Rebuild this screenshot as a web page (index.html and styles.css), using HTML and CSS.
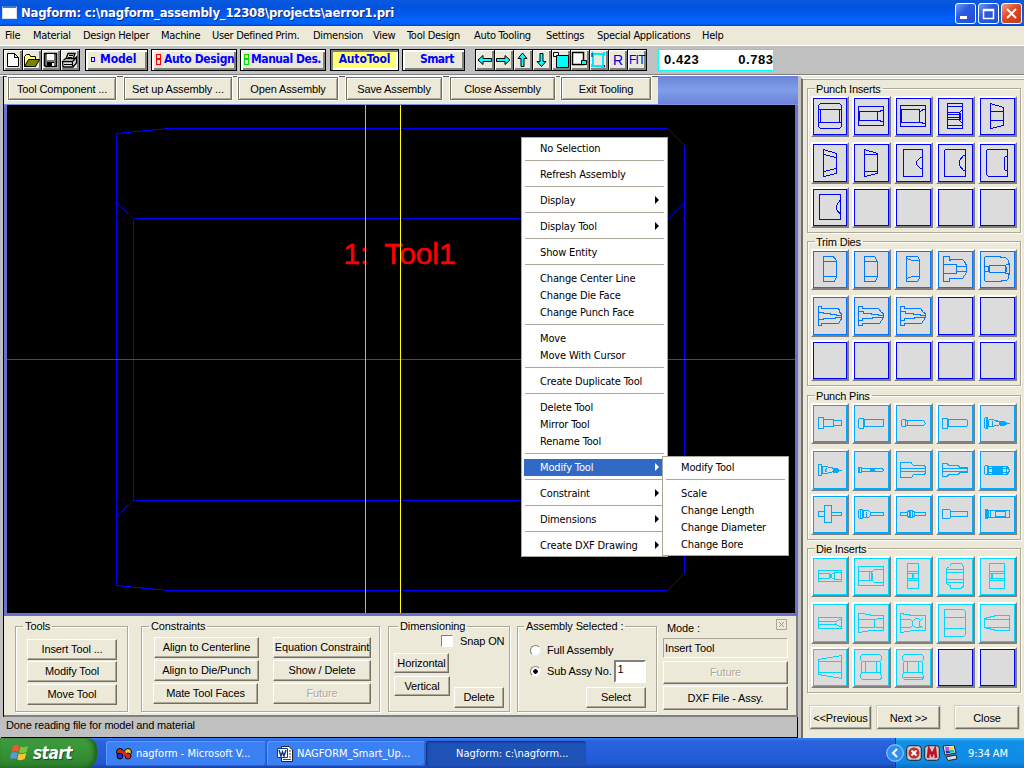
FILE: index.html
```html
<!DOCTYPE html>
<html lang="en">
<head>
<meta charset="utf-8">
<title>Nagform</title>
<link rel="stylesheet" href="styles.css">
</head>
<body>
<header class="titlebar">
  <span class="app-icon"></span>
  <h1 class="title">Nagform: c:\nagform_assembly_12308\projects\aerror1.pri</h1>
  <span class="win-btn"><svg width="17" height="17"><path d="M3 12.5H10" stroke="#fff" stroke-width="3"/></svg></span>
  <span class="win-btn"><svg width="17" height="17"><path d="M3.500 4.500H13.500V13.500H3.500ZM3.500 5.500H13.500" stroke="#fff" fill="none" stroke-width="1.500"/></svg></span>
  <span class="win-btn win-close"><svg width="17" height="17"><path d="M4 4L13 13M13 4L4 13" stroke="#fff" stroke-width="2"/></svg></span>
</header>
<nav class="menubar">
  <span style="width:28px">File</span><span style="width:50px">Material</span><span style="width:78px">Design Helper</span><span style="width:51px">Machine</span><span style="width:101px">User Defined Prim.</span><span style="width:60px">Dimension</span><span style="width:34px">View</span><span style="width:67px">Tool Design</span><span style="width:72px">Auto Tooling</span><span style="width:51px">Settings</span><span style="width:105px">Special Applications</span><span>Help</span>
</nav>
<div class="toolbar">
  <div class="icon-strip">
    <span class="tb"><svg viewBox="0 0 19 22"><path d="M4.500 4.500H11.500L15.500 8.500V17.500H4.500ZM11.500 4.500V8.500H15.500" fill="#fff" stroke="#000"/></svg></span>
    <span class="tb"><svg viewBox="0 0 19 22"><path d="M2.500 17.500V7.500L4.500 5.500H7.500L8.500 7.500H13.500V10.500" fill="#ff6" stroke="#000"/><path d="M2.500 17.500L6.500 10.500H17.500L13.500 17.500Z" fill="#808000" stroke="#000"/></svg></span>
    <span class="tb"><svg viewBox="0 0 19 22"><path d="M3.500 4.500H15.500V17.500H4.500L3.500 16.500Z" fill="#777" stroke="#000" stroke-width="1.500"/><path d="M6 5H13V11H6Z" fill="#fff"/><path d="M6 13H13V17H6Z"/><path d="M11 14H13V17H11Z" fill="#fff"/></svg></span>
    <span class="tb"><svg viewBox="0 0 19 22"><path d="M6 10L8 4.500H15L13 10M3.500 11L6 9.500H15L16.500 8V14L13 18H3L2.500 12.500H12.500L15 10M12.500 12.500V17" fill="#ddd" stroke="#000" stroke-width="1.300"/><path d="M9 6.500H13M8 8.500H12M4 15.500H12" stroke="#000"/></svg></span>
  </div>
  <div class="mode-btn model"><i class="sq blue"></i><span>Model</span></div>
  <div class="mode-btn auto"><i class="pair red"></i><span>Auto Design</span></div>
  <div class="mode-btn manual"><i class="pair green"></i><span>Manual Des.</span></div>
  <div class="mode-btn autotool"><span>AutoTool</span></div>
  <div class="mode-btn smart"><span>Smart</span></div>
  <div class="icon-strip arrows">
    <span class="tb"><svg viewBox="0 0 19 22"><path d="M3 11L8 6.500V9.500H16.500V12.500H8V15.500Z" fill="#0ff" stroke="#000"/></svg></span>
    <span class="tb"><svg viewBox="0 0 19 22"><path d="M16 11L11 6.500V9.500H2.500V12.500H11V15.500Z" fill="#0ff" stroke="#000"/></svg></span>
    <span class="tb"><svg viewBox="0 0 19 22"><path d="M9.500 4L14 9.500H11V17.500H8V9.500H5Z" fill="#0ff" stroke="#000"/></svg></span>
    <span class="tb"><svg viewBox="0 0 19 22"><path d="M9.500 17.500L5 12.500H8V4.500H11V12.500H14Z" fill="#0ff" stroke="#000"/></svg></span>
    <span class="tb"><svg viewBox="0 0 19 22"><path d="M2.500 3.500H7.500V7.500H2.500Z" fill="#fff" stroke="#000"/><path d="M5.500 6.500H17.500V18.500H5.500Z" fill="#0ff" stroke="#000"/></svg></span>
    <span class="tb"><svg viewBox="0 0 19 22"><path d="M2.500 3.500H13.500V15.500H2.500Z" fill="#fff" stroke="#000" stroke-width="1.500"/><path d="M11.500 11.500H16.500V15.500H11.500Z" fill="#0ff" stroke="#000"/></svg></span>
    <span class="tb"><svg viewBox="0 0 19 22"><path d="M4 5H14V17H4ZM3 3L6 6M15 3V7M3 15V18M12 18H16" fill="none" stroke="#00e8ff" stroke-width="2"/><path d="M3 4V8M15 16L16 18" stroke="#000"/></svg></span>
    <span class="tb letter">R</span>
    <span class="tb letter fit">FIT</span>
  </div>
  <div class="coords"><span>0.423</span><span>0.783</span></div>
</div>
<main class="workspace">
  <section class="mdi">
    <div class="strip">
      <div class="cmd" style="width:108px">Tool Component ...</div>
      <div class="cmd" style="width:108px">Set up Assembly ...</div>
      <div class="cmd" style="width:100px">Open Assembly</div>
      <div class="cmd" style="width:96px">Save Assembly</div>
      <div class="cmd" style="width:105px">Close Assembly</div>
      <div class="cmd" style="width:90px">Exit Tooling</div>
      <div class="strip-rest"></div>
    </div>
    <div class="canvas">
      <svg class="drawing" width="788" height="508" viewBox="6.500 104.500 788 508">
        <text x="343" y="263.500" textLength="112" xml:space="preserve">1:  Tool1</text>
        <g class="blue-lines">
          <path d="M116 133L168 128H667L684 145V573L667 590H168L116 585Z"/>
          <path d="M133 218H668M133 218V500M133 500H667"/>
          <path class="thin" d="M116 202L133 218M668 218L684 202M667 500L684 516M133 500L116 516"/>
        </g>
        <path stroke="#ff0000" d="M6 359H795"/>
        <path stroke="#00ffff" d="M365 104V613"/>
        <path stroke="#ffff00" d="M400 104V613"/>
      </svg>
    </div>
    <div class="panel">
      <fieldset class="grp tools"><legend>Tools</legend>
        <div class="btn">Insert Tool ...</div><div class="btn">Modify Tool</div><div class="btn">Move Tool</div>
      </fieldset>
      <fieldset class="grp constraints"><legend>Constraints</legend>
        <div class="btn">Align to Centerline</div><div class="btn">Equation Constraint</div>
        <div class="btn">Align to Die/Punch</div><div class="btn">Show / Delete</div>
        <div class="btn mate">Mate Tool Faces</div><div class="btn off">Future</div>
      </fieldset>
      <fieldset class="grp dims"><legend>Dimensioning</legend>
        <div class="snap"><i class="check"></i>Snap ON</div>
        <div class="btn horiz">Horizontal</div>
        <div class="dim-row"><div class="btn vert">Vertical</div><div class="btn del">Delete</div></div>
      </fieldset>
      <fieldset class="grp assy"><legend>Assembly Selected :</legend>
        <div class="radio-row"><i class="radio"></i>Full Assembly</div>
        <div class="radio-row sub"><i class="radio on"></i>Sub Assy No.<span class="num">1</span></div>
        <div class="btn select">Select</div>
      </fieldset>
      <div class="mode">
        <div class="mode-head"><span>Mode :</span><i class="tiny-x"><svg width="9" height="9"><path d="M2 2L7 7M7 2L2 7" stroke="#999"/></svg></i></div>
        <div class="field">Insert Tool</div>
        <div class="btn off">Future</div>
        <div class="btn">DXF File - Assy.</div>
      </div>
    </div>
    <div class="status">Done reading file for model and material</div>
  </section>
  <aside class="side">
    <fieldset class="palette c-blue"><legend>Punch Inserts</legend>
      <span class="tile"><svg viewBox="-.5 -.5 39 42"><path d="M9 7H28L30 9V30L28 32H9L7 30V9ZM7 13H30M7 26H30M9 13V26M28 13V26"/></svg></span>
      <span class="tile"><svg viewBox="-.5 -.5 39 42"><path d="M6 10H31V29H6ZM6 15H25V24H6M7 15V24M25 15H28V14H31M25 24H28V25H31"/></svg></span>
      <span class="tile"><svg viewBox="-.5 -.5 39 42"><path d="M6 9H31V30H6ZM6 13H25V26H6M7 13V26M25 15L28 14V13H31M25 26H28V27H31"/></svg></span>
      <span class="tile"><svg viewBox="-.5 -.5 39 42"><path d="M11 7H26V32H11ZM11 10H26M11 29H26M11 16H23M11 18H24M11 21H24M11 23H23M26 13L23 16V24L26 27M24 16V23"/></svg></span>
      <span class="tile"><svg viewBox="-.5 -.5 39 42"><path d="M12 7L25 11V29L12 32ZM12 15H25M12 24H25"/></svg></span>
      <span class="tile"><svg viewBox="-.5 -.5 39 42"><path d="M12 7L25 11V31L12 34ZM12 12L25 15M12 29L25 26"/></svg></span>
      <span class="tile"><svg viewBox="-.5 -.5 39 42"><path d="M12 7L25 11V31L12 34ZM12 12H25M12 29H25"/></svg></span>
      <span class="tile"><svg viewBox="-.5 -.5 39 42"><path d="M9 7H28V34H9ZM28 15H26L22 19V22L26 26H28"/></svg></span>
      <span class="tile"><svg viewBox="-.5 -.5 39 42"><path d="M9 7H29V34H8V8ZM29 13H27L23 18V23L27 28H29"/></svg></span>
      <span class="tile"><svg viewBox="-.5 -.5 39 42"><path d="M9 7H29V34H10L8 32V8ZM29 14H27L26 15V27L27 28H29"/></svg></span>
      <span class="tile"><svg viewBox="-.5 -.5 39 42"><path d="M8 7H29V32H8ZM29 12L25 18V22L29 27"/></svg></span>
      <span class="tile"></span><span class="tile"></span><span class="tile"></span><span class="tile"></span>
    </fieldset>
    <fieldset class="palette c-azure"><legend>Trim Dies</legend>
      <span class="tile"><svg viewBox="-.5 -.5 39 42"><path d="M12 7H22L23 9H24L25 12V27L23 32H12ZM12 12H25M12 27H25"/></svg></span>
      <span class="tile"><svg viewBox="-.5 -.5 39 42"><path d="M12 7H22L25 12V27L23 32H12ZM12 12H25M12 27H25"/></svg></span>
      <span class="tile"><svg viewBox="-.5 -.5 39 42"><path d="M12 7H23L25 10V29L23 32H12ZM12 9L18 11H24M12 29L18 27H25"/></svg></span>
      <span class="tile"><svg viewBox="-.5 -.5 39 42"><path d="M7 7H13V11H14V10H26L28 12L30 16V23L26 29H13V32H7ZM7 15H20V24H7M20 17H30M20 22H30"/></svg></span>
      <span class="tile"><svg viewBox="-.5 -.5 39 42"><path d="M7 7H22V8H27L30 11V14H31V25H30V29L28 31H23V32H7L6 31V8ZM6 17H10V22H6M11 16H27V23H11ZM27 15H31M27 24H31M27 15V24M28 17V22"/></svg></span>
      <span class="tile"><svg viewBox="-.5 -.5 39 42"><path d="M7 11H10V13H26L28 14V17L30 18V24H29L28 27L27 28H10V30H7ZM7 17H12V18H19V19H25V20H30M7 24H12V23H24V22H30"/></svg></span>
      <span class="tile"><svg viewBox="-.5 -.5 39 42"><path d="M6 11H10V13H26L29 17L31 18V22L29 25L27 28H10V30H6ZM6 16H11V18H19V19H26V20H31M6 25H10V23H20V22H31"/></svg></span>
      <span class="tile"><svg viewBox="-.5 -.5 39 42"><path d="M6 11H10V13H26L29 17L31 18V22L29 25L27 28H10V30H6ZM6 16H11V18H19V19H26V20H31M6 25H10V23H20V22H31"/></svg></span>
      <span class="tile none"></span><span class="tile none"></span><span class="tile none"></span><span class="tile none"></span><span class="tile none"></span><span class="tile none"></span><span class="tile none"></span>
    </fieldset>
    <fieldset class="palette c-sky"><legend>Punch Pins</legend>
      <span class="tile"><svg viewBox="-.5 -.5 39 42"><path d="M7 14H12V25H7ZM12 16H22V23H12M22 17H30V22H22"/></svg></span>
      <span class="tile"><svg viewBox="-.5 -.5 39 42"><path d="M7 15H11V25H7L6 24V16ZM12 16H31V23H12Z"/></svg></span>
      <span class="tile"><svg viewBox="-.5 -.5 39 42"><path d="M8 16H11V23H8L7 22V17ZM11 17H29L31 20L29 22H11M13 17V22"/></svg></span>
      <span class="tile"><svg viewBox="-.5 -.5 39 42"><path d="M6 15H11V25H6ZM12 16H30L31 17V22L30 23H12Z"/></svg></span>
      <span class="tile"><svg viewBox="-.5 -.5 39 42"><path d="M7 14H9V25H7L6 24V15ZM10 16H14L17 17H19M10 23H14L17 22H20M8 14V25M10 16V23M14 17V22M18 18L27 20L18 22M31 20H25"/><path class="fill" d="M21 18H26L29 20L26 22H22Z"/></svg></span>
      <span class="tile"><svg viewBox="-.5 -.5 39 42"><path d="M7 15H10V26H7ZM11 17H15L18 18H20L24 20L20 23H18L15 24H11ZM15 19L14 21L15 23M30 21H24"/><path class="fill" d="M22 19H26L28 21L26 23H22Z"/></svg></span>
      <span class="tile"><svg viewBox="-.5 -.5 39 42"><path d="M6 18H9V23H6ZM9 19H30L31 21L30 22H9M7 18V23"/><path class="fill" d="M18 20H22V22H18Z"/></svg></span>
      <span class="tile"><svg viewBox="-.5 -.5 39 42"><path d="M6 13H17V14L19 16H30L31 18V23L30 25H19L17 28H6ZM6 19H31M6 22H31"/></svg></span>
      <span class="tile"><svg viewBox="-.5 -.5 39 42"><path d="M6 14H11L12 16H22L23 18H31V23H23L22 25H12L11 27H6ZM6 19H31M6 22H31"/></svg></span>
      <span class="tile"><svg viewBox="-.5 -.5 39 42"><path d="M7 16H9V25H7L6 24V17ZM10 17H29L31 21L29 25H10ZM10 19H29M10 23H29M28 17V25"/><path class="fill" d="M14 18H24V24H14Z"/></svg></span>
      <span class="tile"><svg viewBox="-.5 -.5 39 42"><path d="M13 11H20V28H13ZM13 17H7V22H13M20 18H30V21H20"/></svg></span>
      <span class="tile"><svg viewBox="-.5 -.5 39 42"><path d="M7 15H10V24H7L6 23V16ZM11 16H16L18 18H31V21H18L16 23H11ZM8 15V24M14 17V22M18 18V21"/></svg></span>
      <span class="tile"><svg viewBox="-.5 -.5 39 42"><path d="M6 18H13V21H6ZM14 16H18V23H14L13 21V18ZM18 17L22 18H31V21H22L18 22M15 16V23M16 16V23M20 18V21"/></svg></span>
      <span class="tile"><svg viewBox="-.5 -.5 39 42"><path d="M6 15H13L14 16V23L13 24H6ZM14 17H31V22H14"/></svg></span>
      <span class="tile"><svg viewBox="-.5 -.5 39 42"><path d="M10 16H31V23H10ZM17 17H27V22H17ZM12 16V23"/><path class="fill" d="M7 15H9V24H7Z"/></svg></span>
    </fieldset>
    <fieldset class="palette c-cyan"><legend>Die Inserts</legend>
      <span class="tile"><svg viewBox="-.5 -.5 39 42"><path d="M7 14H30V25H7ZM7 17H17L19 18H20L23 16H30M7 22H17L20 21L23 23H30M23 16V23"/><path class="fill" d="M18 18H20V21H18Z"/></svg></span>
      <span class="tile"><svg viewBox="-.5 -.5 39 42"><path d="M6 10H31V29H6ZM6 15H20L22 13H31M6 24H20L22 26H31M17 15V24M19 15V24M20 16V23"/></svg></span>
      <span class="tile"><svg viewBox="-.5 -.5 39 42"><path d="M13 7H24V32H13ZM13 15H24M13 24H24M13 17H24M13 22H24M18 17V22M19 17V22"/></svg></span>
      <span class="tile"><svg viewBox="-.5 -.5 39 42"><path d="M14 8L15 7H25L27 10V29L26 31L24 32H14V29L11 28L10 27V12L13 10L14 9ZM10 13H27M10 16H27M10 23H27M10 26H27"/></svg></span>
      <span class="tile"><svg viewBox="-.5 -.5 39 42"><path d="M11 7H26V32H11ZM11 15H26M11 24H26M11 17H26M11 22H26M14 17V22M13 17V22"/></svg></span>
      <span class="tile"><svg viewBox="-.5 -.5 39 42"><path d="M7 15H30V26H7ZM7 19H25L28 17H30M7 22H25L28 24H30M24 20V22"/></svg></span>
      <span class="tile"><svg viewBox="-.5 -.5 39 42"><path d="M6 11L18 12V13H31V28H19L6 30ZM6 17H22V25H6M22 18L25 16H31M22 24L25 25H31"/></svg></span>
      <span class="tile"><svg viewBox="-.5 -.5 39 42"><path d="M6 11L18 13H31V28H19L6 30ZM6 17H16L18 19L21 16H24L26 18L28 16M6 25H16L18 23L21 25H25L27 24L29 26M18 19V23M25 18V24"/></svg></span>
      <span class="tile"><svg viewBox="-.5 -.5 39 42"><path d="M8 7H27L29 9V32L27 34H8ZM8 15H29M8 26H29"/></svg></span>
      <span class="tile"><svg viewBox="-.5 -.5 39 42"><path d="M6 16L18 13H31V28H18L6 25ZM6 17H31M6 25H31"/></svg></span>
      <span class="tile"><svg viewBox="-.5 -.5 39 42"><path d="M7 12L30 8V31L7 27ZM7 14H30M7 25H30"/></svg></span>
      <span class="tile"><svg viewBox="-.5 -.5 39 42"><path d="M10 7H27L29 9V12L27 14H10L8 12V9ZM10 25H27L29 28V31L27 32H10L8 30V27ZM9 14V25M28 14V25M13 14V25M24 14V25"/></svg></span>
      <span class="tile"><svg viewBox="-.5 -.5 39 42"><path d="M10 7H27L29 9V12L27 14H10L8 12V9ZM10 25H27L29 28V31L27 32H10L8 30V27ZM9 14V25M28 14V25M13 14V25M24 14V25M9 30H28"/></svg></span>
      <span class="tile none"></span><span class="tile none"></span>
    </fieldset>
    <div class="side-btns"><div class="btn prev">&lt;&lt;Previous</div><div class="btn next">Next &gt;&gt;</div><div class="btn close">Close</div></div>
  </aside>
</main>
<footer class="taskbar">
  <div class="start"><svg width="20" height="20" viewBox="0 0 20 20"><path d="M3 3Q6 1 9.500 3L8 9Q5 7 1.500 9Z" fill="#f05a28"/><path d="M10.500 3.500Q14 5 18 3L16.500 9Q13 11 9 9.500Z" fill="#7cc33f"/><path d="M1.300 10Q4 8.500 7.800 10L6.300 16Q3 14.500 0 16Z" fill="#5b93f0"/><path d="M8.800 10.500Q12 12 16.200 10L14.700 16Q11 18 7.300 16.500Z" fill="#fbc72e"/></svg><span>start</span></div>
  <div class="task t1"><svg width="16" height="12" viewBox="0 0 16 12"><circle cx="4" cy="4" r="3.500" fill="#0a9020" stroke="#000"/><circle cx="12" cy="4" r="3.500" fill="#e8d020" stroke="#000"/><circle cx="4" cy="8" r="3" fill="#2030d0" stroke="#000"/><circle cx="12" cy="8" r="3" fill="#e02020" stroke="#000"/><path d="M2 3Q8 3 13 10" stroke="#e02020" stroke-width="3" fill="none"/></svg><span>nagform - Microsoft V...</span></div>
  <div class="task t2"><svg width="16" height="16" viewBox="0 0 16 16"><path d="M4.500 .5H12L15.500 4V15.500H4.500Z" fill="#fff" stroke="#222"/><path d="M12 5H14M12 8H14M12 11H14M6 13.500H14" stroke="#444"/><path d="M.5 2.500H10.500V11.500H.5Z" fill="#fff" stroke="#123a8c"/><path d="M2 4L4 10L5.500 6L7 10L9 4" fill="none" stroke="#123a8c" stroke-width="1.500"/></svg><span>NAGFORM_Smart_Up...</span></div>
  <div class="task t3"><span>Nagform: c:\nagform...</span></div>
  <div class="tray">
    <svg class="chev" width="18" height="18"><circle cx="9" cy="9" r="8.300" fill="#2f8ff0" stroke="#a8d4ff"/><path d="M11 5L7 9L11 13" fill="none" stroke="#fff" stroke-width="2"/></svg>
    <svg width="16" height="16"><rect x=".7" y=".7" width="14.600" height="14.600" rx="3" fill="#c9c9c9" stroke="#222"/><circle cx="8" cy="8" r="5.500" fill="#c3272f"/><path d="M5.500 5.500L10.500 10.500M10.500 5.500L5.500 10.500" stroke="#fff" stroke-width="2"/></svg>
    <svg width="16" height="16"><rect x=".7" y=".7" width="14.600" height="14.600" rx="3" fill="#c9c9c9" stroke="#222"/><path d="M4 13L5 4L8 10L11 4L12 13" fill="none" stroke="#c0102a" stroke-width="2.600"/></svg>
    <svg width="16" height="16"><path d="M1 1L12 0L14 8L3 10Z" fill="#eee" stroke="#222"/><path d="M3 2L7 2L7.500 5L3.500 5.500Z" fill="#e838e8"/><path d="M7 2L11 1.500L12 5L7.500 5Z" fill="#f0e020"/><path d="M3.500 5.500H7.500L8 8L4 8.500Z" fill="#1030e0"/><path d="M7.500 5L12 5L12.500 7.500L8 8Z" fill="#20c0a0"/><path d="M4 12L14 10L15 14L6 15.500Z" fill="#ddd" stroke="#222"/></svg>
    <span class="clock">9:34 AM</span>
  </div>
</footer>
<div class="popup main-menu">
  <p>No Selection</p><hr><p>Refresh Assembly</p><hr><p class="more">Display</p><hr><p class="more">Display Tool</p><hr><p>Show Entity</p><hr>
  <p>Change Center Line</p><p>Change Die Face</p><p>Change Punch Face</p><hr><p>Move</p><p>Move With Cursor</p><hr><p>Create Duplicate Tool</p><hr>
  <p>Delete Tool</p><p>Mirror Tool</p><p>Rename Tool</p><hr><p class="more hot">Modify Tool</p><hr><p class="more">Constraint</p><hr><p class="more">Dimensions</p><hr><p class="more">Create DXF Drawing</p>
</div>
<div class="popup sub-menu">
  <p>Modify Tool</p><hr><p>Scale</p><p>Change Length</p><p>Change Diameter</p><p>Change Bore</p>
</div>
</body>
</html>
```
FILE: styles.css
```css
* { box-sizing: border-box; }
body {
  margin: 0; width: 1024px; height: 768px; overflow: hidden;
  display: flex; flex-direction: column; position: relative;
  background: #ece9d8; color: #000;
  font: 11px/13px "Liberation Sans", Arial, sans-serif; letter-spacing: -.12px;
  white-space: nowrap;
}
svg { display: block; flex: none; }

.titlebar {
  height: 26px; flex: none; display: flex; align-items: center; gap: 2px; padding: 0 0 0 2px;
  background: linear-gradient(#0a5ae0 0, #0453dd 25%, #0058ee 50%, #0066ff 80%, #0060f5 92%, #003fc0 100%);
}
.app-icon { width: 15px; height: 13px; margin: 0 2px 2px 0; background: #fff; border: 1px solid #dde; border-top: 2px solid #3b7bd8; }
.title {
  margin: 0; flex: 1; color: #fff; text-shadow: 1px 1px #0a2a80;
  font: bold 13px/20px "DejaVu Sans Condensed", "DejaVu Sans", sans-serif; font-stretch: condensed; letter-spacing: -.23px;
}
.win-btn { width: 21px; height: 21px; border: 1px solid #fff; border-radius: 3px; padding: 1px; background: linear-gradient(135deg, #6f9bf0, #2a5be0 40%, #1f4fd6); margin-right: 0; }
.win-close { background: linear-gradient(135deg, #f0a080, #dd4a22 45%, #c8391a); margin-right: 2px; }

.menubar, .popup, .task, .clock { font-family: "DejaVu Sans Condensed", "DejaVu Sans", sans-serif; font-stretch: condensed; }
.menubar { height: 20px; flex: none; display: flex; padding: 3px 0 0 5px; gap: 0; border-bottom: 1px solid #fff; letter-spacing: -.3px; }
.menubar span { flex: none; }

.toolbar { height: 30px; flex: none; display: flex; align-items: flex-start; padding: 3px 0 0 3px; background: #c0c0c0; border-bottom: 1px solid #fff; box-shadow: inset 0 -1px #808080; }
.icon-strip { display: flex; flex: none; border-left: 1px solid #000; margin-right: 5px; }
.tb { width: 19px; height: 22px; border: 1px solid #000; border-left: 0; background: #ece9d8; box-shadow: inset 1px 1px #fff, inset -2px -2px #808080; }
.tb svg { width: 19px; height: 22px; margin: -1px 0 0 -1px; }
.letter { color: #0000e0; font-size: 14px; line-height: 20px; text-align: center; }
.fit { font-size: 12px; letter-spacing: -.6px; }
.mode-btn { height: 22px; flex: none; display: flex; align-items: center; border: 1px solid #000; background: #ece9d8; box-shadow: inset 2px 2px #fff, inset -2px -2px #808080; color: #00f; font: bold 12px/18px "DejaVu Sans Condensed", "DejaVu Sans", sans-serif; font-stretch: condensed; padding-bottom: 2px; margin-right: 3px; letter-spacing: -.35px; }
.mode-btn span, .mode-btn i { flex: none; }
.model { width: 63px; padding-left: 5px; gap: 5px; letter-spacing: -.1px; }
.auto { width: 86px; padding-left: 4px; gap: 3px; }
.manual { width: 86px; padding-left: 3px; gap: 2px; margin-right: 4px; letter-spacing: -.45px; }
.autotool { width: 69px; justify-content: center; background: #ffff70; box-shadow: inset 2px 2px #808080, inset -2px -2px #fff; letter-spacing: -.15px; }
.smart { width: 63px; padding-left: 17px; margin-right: 10px; letter-spacing: -.6px; }
.sq { width: 4px; height: 5px; border: 1px solid #00f; }
.pair { width: 5px; height: 11px; display: flex; flex-direction: column; justify-content: space-between; }
.pair::before, .pair::after { content: ""; height: 4px; border: 1px solid; }
.red { color: #f00; }
.green { color: #0d0; }
.arrows { margin-right: 11px; }
.coords { width: 115px; height: 22px; flex: none; display: flex; justify-content: space-between; border: 1px solid #0ff; border-right: 0; background: #fff; padding: 0 0 0 5px; font: bold 13px/19px "Liberation Sans", Arial, sans-serif; letter-spacing: .55px; }
.coords span:last-child { margin-right: -.5px; }

.workspace { flex: 1; display: flex; min-height: 0; }
.mdi { width: 801px; padding-left: 4px; flex: none; background: linear-gradient(90deg, #c0c0c0 3px, #000 3px 4px, transparent 4px 794px, #000 798px); border-right: 3px solid #c0c0c0; display: flex; flex-direction: column; }
.strip { height: 29px; flex: none; display: flex; background: #ece9d8; padding-left: 4px; gap: 8px; border-bottom: 1px solid #7b93e0; box-shadow: inset 0 1px #555; }
.cmd { flex: none; height: 23px; margin-top: 1px; border: 1px solid #716f64; outline: 1px solid #fff; box-shadow: inset 1px 1px #fff, inset -1px -1px #aca899; text-align: center; line-height: 22px; }
.cmd:nth-child(2) { width: 109px; }
.cmd:nth-child(3) { margin-left: -2px; }
.cmd:nth-child(6) { margin-left: -2px; }
.strip-rest { flex: 1; margin-left: -1px; background: linear-gradient(#6d82d8, #7f9ee8 50%, #6d82d8); }
.canvas { height: 511px; flex: none; background: #000; border: solid #6a70cc; border-width: 0 3px 3px; }
.drawing { shape-rendering: crispEdges; stroke: none; fill: none; }
.drawing text { fill: #f00; stroke: #f00; stroke-width: .5; font: 30px "Liberation Sans", Arial, sans-serif; }
.blue-lines { stroke: #0000ff; }
.thin { stroke-opacity: .8; }

.panel { height: 101px; flex: none; display: flex; padding: 7px 0 4px 11px; background: #ece9d8; border-bottom: 2px solid #808080; border-right: 2px solid #808080; }
.grp, .palette { margin: 0; padding: 0; border: 1px solid #aca899; box-shadow: 1px 1px #fff, inset 1px 1px #fff; min-width: 0; }
legend { margin: 0 0 0 7px; padding: 0 2px; height: 13px; line-height: 13px; font-size: 11px; }
.btn { height: 21px; border: 1px solid; border-color: #fff #716f64 #716f64 #fff; box-shadow: inset -1px -1px #aca899; text-align: center; line-height: 19px; background: #ece9d8; }
.off { color: #aca899; text-shadow: 1px 1px #fff; }
.grp { height: 92px; flex: none; margin-top: -3px; }
.tools { width: 113px; margin-right: 13px; }
.tools .btn { margin: 0 10px 2px 11px; height: 21px; }
.tools legend + .btn { margin-top: 6px; margin-bottom: 1px; }
.constraints { width: 239px; margin-right: 8px; display: grid; grid-template-columns: 105px 98px; column-gap: 14px; row-gap: 2px; padding: 4px 0 0 12px; align-content: start; }
.constraints legend { margin-left: -5px; }
.mate { margin: 0 1px 0 -1px; }
.dims { width: 122px; margin-right: 7px; }
.dims legend { margin-left: 9px; }
.snap { display: flex; align-items: center; gap: 7px; padding-left: 52px; height: 16px; margin-bottom: 4px; }
.check { width: 12px; height: 12px; background: #fff; border: 1px solid; border-color: #808080 #fff #fff #808080; }
.horiz { width: 55px; height: 20px; margin-left: 5px; }
.vert { width: 56px; height: 20px; }
.dim-row { display: flex; gap: 4px; margin: 3px 0 0 5px; }
.del { width: 50px; margin-top: 11px; }
.assy { width: 140px; margin-right: 6px; }
.assy legend { margin-left: 6px; }
.radio-row { display: flex; align-items: center; height: 21px; padding: 0 0 0 12px; margin-top: 7px; gap: 6px; }
.sub { margin-top: 0; }
.radio { width: 11px; height: 11px; border-radius: 50%; background: #fff; border: 1px solid #808080; border-right-color: #eee; border-bottom-color: #eee; }
.on { background: radial-gradient(#000 2px, #fff 2.500px); }
.num { width: 32px; height: 23px; background: #fff; border: 2px solid; border-color: #808080 #fff #fff #808080; padding: 1px 2px; margin-left: -4px; }
.select { width: 60px; margin: 5px 0 0 68px; }
.mode { width: 125px; margin-top: -3px; }
.mode-head { display: flex; justify-content: space-between; height: 18px; padding: 2px 1px 0 4px; }
.tiny-x { width: 11px; height: 11px; border: 1px solid #aca899; margin-top: -3px; }
.field { height: 20px; border: 1px solid; border-color: #aca899 #fff #fff #aca899; padding: 3px 0 0 1px; margin-bottom: 3px; }
.mode .btn { height: 24px; line-height: 22px; margin-bottom: 2px; }
.mode .off { height: 23px; line-height: 21px; }
.status { flex: none; height: 21px; background: #c0c0c0; border: 1px solid #000; border-width: 0 1px 1px 0; margin-left: -3px; padding: 2px 0 0 5px; letter-spacing: -.17px; }

.side { flex: 1; display: flex; flex-direction: column; border-left: 2px solid #716f64; border-top: 1px solid #fff; margin-top: 2px; padding: 3px 3px 0 4px; background: #ece9d8; box-shadow: inset 0 1px #aca899; }
.palette { display: grid; height: 151px; flex: none; grid-template-columns: 38px repeat(4, 39px); grid-template-rows: 41px 42px 41px; column-gap: 3px; padding: 1px 0 0 3px; margin-bottom: 2px; align-content: start; }
.palette legend { margin-left: 4px; padding-left: 1px; line-height: 14px; letter-spacing: -.2px; }
.palette .tile:nth-of-type(n+6):nth-of-type(-n+10) { margin-top: 5px; margin-bottom: -5px; }
.palette .tile:nth-of-type(n+11) { margin-top: 8px; margin-bottom: -8px; }
.palette:nth-of-type(3) { margin-top: 1px; }
.tile { border: 2px solid; border-color: #fff #808080 #808080 #fff; background: #dcdcdc; box-shadow: inset 0 0 0 1px var(--line); overflow: hidden; }
.tile svg { width: 39px; height: 42px; margin: -2px 0 0 -2px; fill: none; stroke: var(--line); shape-rendering: crispEdges; }
.tile .fill { fill: var(--line); }
.c-blue, .none { --line: #0000ff; }
.c-azure { --line: #0078ff; }
.c-sky { --line: #00a8ff; }
.c-cyan { --line: #00d8ff; }
.tile.none { --line: #0000ff; }
.side-btns { display: flex; margin: 11px 0 0 3px; }
.side-btns .btn { height: 23px; line-height: 22px; outline: 1px solid #d0cdbd; }
.prev { width: 61px; margin-right: 6px; }
.next { width: 63px; margin-right: 15px; }
.close { width: 64px; }

.taskbar { height: 30px; flex: none; display: flex; align-items: stretch; color: #fff; background: linear-gradient(#3a80f0 0, #2a63dc 10%, #245edb 50%, #2058d0 85%, #1941a5 100%); }
.start { width: 97px; display: flex; align-items: center; gap: 3px; padding-left: 10px; border-radius: 0 10px 12px 0; background: linear-gradient(#5fae5f 0, #3c9a3c 12%, #348f34 60%, #2c7d2c 100%); box-shadow: inset -3px 0 4px #1d5f1d; margin-right: 9px; font: italic bold 17px/24px "DejaVu Sans Condensed", "DejaVu Sans", sans-serif; font-stretch: condensed; text-shadow: 1px 1px 1px #1a4a1a; letter-spacing: -.5px; }
.start span { padding-bottom: 1px; }
.task { display: flex; align-items: center; margin: 3px 1px 2px 0; border-radius: 3px; background: #3c81f3; box-shadow: inset 1px 1px #5d9bff, inset -1px -1px #2b66d0; height: 25px; padding-left: 10px; gap: 4px; letter-spacing: 0; }
.t1 { width: 160px; }
.t2 { width: 158px; }
.t3 { width: 160px; padding-left: 30px; background: #1e52b7; box-shadow: inset 1px 1px 2px #10307a; }
.tray { margin-left: auto; width: 129px; display: flex; align-items: center; gap: 2px; background: linear-gradient(#3fb4f8 0, #1290e8 12%, #0f8ae6 80%, #0d70c0 100%); border-left: 1px solid #0b3e90; }
.chev { margin-left: -10px; }
.clock { margin-left: 8px; letter-spacing: -.1px; }

.popup { position: absolute; background: #fff; border: 1px solid #aca899; padding: 2px; letter-spacing: -.15px; }
.main-menu { left: 521px; top: 137px; width: 147px; height: 420px; }
.sub-menu { left: 662px; top: 456px; width: 127px; height: 100px; }
.popup p { margin: 0; height: 17px; line-height: 18px; padding-left: 16px; position: relative; }
.popup hr { border: 0; height: 1px; margin: 3px 1px 5px; background: #aca899; }
.more::after { content: ""; position: absolute; right: 6px; top: 4px; border: solid transparent; border-width: 4px 0 4px 4px; border-left-color: currentColor; }
.hot { background: #316ac5; color: #fff; }
```
